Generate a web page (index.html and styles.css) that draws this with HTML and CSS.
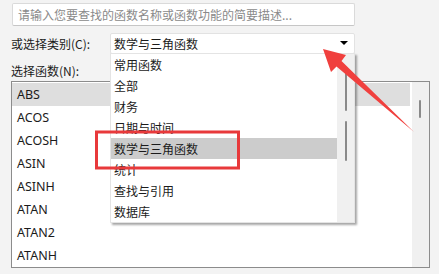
FILE: index.html
```html
<!DOCTYPE html>
<html lang="zh-CN">
<head>
  <meta charset="UTF-8" />
  <title>插入函数</title>
  <link rel="stylesheet" href="styles.css">
</head>
<body>

  <div class="dialog">
    <div class="search">请输入您要查找的函数名称或函数功能的简要描述...</div>

    <div class="category-row">
      <span class="label">或选择类别(C):</span>
      <div class="select">
        <span>数学与三角函数</span>
        <span class="caret"></span>
      </div>
    </div>

    <div class="fn-label">选择函数(N):</div>

    <div class="listbox">
      <ul class="items">
        <li class="selected">ABS</li>
        <li>ACOS</li>
        <li>ACOSH</li>
        <li>ASIN</li>
        <li>ASINH</li>
        <li>ATAN</li>
        <li>ATAN2</li>
        <li>ATANH</li>
      </ul>
      <div class="scrollbar">
        <span class="thumb list-thumb"></span>
      </div>
    </div>

    <!-- opened category dropdown -->
    <div class="popup">
      <ul class="popup-items">
        <li>常用函数</li>
        <li>全部</li>
        <li>财务</li>
        <li>日期与时间</li>
        <li class="hover">数学与三角函数</li>
        <li>统计</li>
        <li>查找与引用</li>
        <li>数据库</li>
      </ul>
      <div class="scrollbar popup-bar">
        <span class="thumb thumb-a"></span>
        <span class="thumb thumb-b"></span>
      </div>
    </div>

    <!-- annotation marks -->
    <svg class="marks" width="439" height="274" viewBox="0 0 439 274">
      <rect x="96.5" y="132" width="142" height="36" fill="none" stroke="#e8393b" stroke-width="3"/>
      <polygon points="323,49 346,55 341.5,61 414,132 336.5,66.5 331,72" fill="#f0403e"/>
    </svg>
  </div>

</body>
</html>
```

FILE: styles.css
```css
* {
  margin: 0;
  padding: 0;
  box-sizing: border-box;
}

body {
  background-color: #f3f3f3;
  font-family: "Noto Sans CJK SC", "Noto Sans", sans-serif;
  font-size: 12px;
  color: #1b1b1b;
}

.dialog {
  position: relative;
  width: 439px;
  height: 274px;
  padding: 3px 0 0 11px;
  overflow: hidden;
}

.search {
  margin-left: 1px;
  width: 343px;
  height: 23px;
  background: #fff;
  border: 1px solid #dadada;
  border-bottom-color: #c6c6c6;
  border-radius: 2px;
  padding-left: 5px;
  line-height: 21px;
  color: #8a8a8a;
  white-space: nowrap;
  overflow: hidden;
}

.category-row {
  display: flex;
  align-items: center;
  margin-top: 7px;
  height: 21px;
}

.label {
  width: 99px;
}

.select {
  width: 245px;
  height: 21px;
  background: #fff;
  border: 1px solid #e2e2e2;
  border-radius: 2px;
  display: flex;
  align-items: center;
  justify-content: space-between;
  padding: 0 6px 0 3px;
}

.caret {
  width: 0;
  height: 0;
  border-left: 4px solid transparent;
  border-right: 4px solid transparent;
  border-top: 4px solid #000;
  margin-top: -1px;
}

.fn-label {
  margin-top: 9px;
  height: 16px;
  line-height: 16px;
}

.listbox {
  margin-top: 2px;
  width: 419px;
  height: 187px;
  background: #fff;
  border: 1px solid #8c8c8c;
  display: flex;
  overflow: hidden;
}

.items {
  list-style: none;
  flex: 1;
  padding: 1px 2px 0 0;
}

.items li {
  height: 23px;
  line-height: 23px;
  padding-left: 5px;
  font-family: "Noto Sans", "Noto Sans CJK SC", sans-serif;
  font-size: 12.5px;
}

.items li.selected {
  background: #dedede;
}

.scrollbar {
  position: relative;
  width: 17px;
  background: #f0f0f0;
}

.thumb {
  position: absolute;
  left: 7px;
  width: 2px;
  background: #8a8a8a;
  border-radius: 1px;
}

.list-thumb {
  top: 18px;
  height: 18px;
}

.popup {
  position: absolute;
  left: 110px;
  top: 53px;
  width: 245px;
  height: 170px;
  background: #fff;
  border: 1px solid #e4e4e4;
  box-shadow: 2px 2px 2px rgba(0, 0, 0, 0.35);
  display: flex;
}

.popup-items {
  list-style: none;
  flex: 1;
}

.popup-items li {
  height: 21px;
  line-height: 21px;
  padding-left: 3px;
}

.popup-items li.hover {
  background: #cccccc;
}

.popup-bar {
  width: 17px;
}

.thumb-a {
  left: 8px;
  top: 18px;
  height: 39px;
}

.thumb-b {
  left: 8px;
  top: 67px;
  height: 40px;
}

.marks {
  position: absolute;
  left: 0;
  top: 0;
}
```
